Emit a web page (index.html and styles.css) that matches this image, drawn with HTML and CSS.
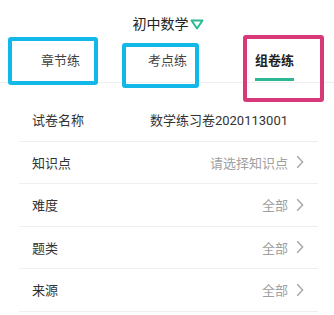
FILE: index.html
```html
<!DOCTYPE html>
<html lang="zh">
<head>
<meta charset="utf-8">
<link rel="stylesheet" href="styles.css">
</head>
<body>
<div class="page">
  <header class="header">
    <span class="title">初中数学</span>
    <svg class="caret" width="14" height="11" viewBox="0 0 14 11"><polygon points="1.5,1.5 12.5,1.5 7,9.5" fill="none" stroke="#2cb893" stroke-width="2" stroke-linejoin="round"/></svg>
  </header>
  <nav class="tabs">
    <div class="tab"><span class="tab-label">章节练</span></div>
    <div class="tab"><span class="tab-label">考点练</span></div>
    <div class="tab active"><span class="tab-label">组卷练</span></div>
  </nav>
  <ul class="form">
    <li class="row"><span class="label">试卷名称</span><span class="value strong">数学练习卷2020113001</span></li>
    <li class="row"><span class="label">知识点</span><span class="value">请选择知识点</span><span class="chev"><svg width="8" height="14" viewBox="0 0 8 14"><path d="M1.2 1.2 L6.6 7 L1.2 12.8" fill="none" stroke="#a8a8a8" stroke-width="1.5"/></svg></span></li>
    <li class="row"><span class="label">难度</span><span class="value">全部</span><span class="chev"><svg width="8" height="14" viewBox="0 0 8 14"><path d="M1.2 1.2 L6.6 7 L1.2 12.8" fill="none" stroke="#a8a8a8" stroke-width="1.5"/></svg></span></li>
    <li class="row"><span class="label">题类</span><span class="value">全部</span><span class="chev"><svg width="8" height="14" viewBox="0 0 8 14"><path d="M1.2 1.2 L6.6 7 L1.2 12.8" fill="none" stroke="#a8a8a8" stroke-width="1.5"/></svg></span></li>
    <li class="row"><span class="label">来源</span><span class="value">全部</span><span class="chev"><svg width="8" height="14" viewBox="0 0 8 14"><path d="M1.2 1.2 L6.6 7 L1.2 12.8" fill="none" stroke="#a8a8a8" stroke-width="1.5"/></svg></span></li>
  </ul>
  <div class="mark mark-blue mark-1"></div>
  <div class="mark mark-blue mark-2"></div>
  <div class="mark mark-pink mark-3"></div>
</div>
</body>
</html>
```

FILE: styles.css
```css
* { box-sizing: border-box; }
html, body { margin: 0; padding: 0; background: #fff; }
body {
  font-family: Roboto, "Noto Sans CJK SC", sans-serif;
  color: #333;
  font-size: 13px;
}
.page {
  position: relative;
  width: 334px;
  height: 315px;
  overflow: hidden;
}
.header {
  height: 47px;
  display: flex;
  align-items: center;
  justify-content: center;
}
.title {
  font-size: 14px;
  line-height: 18px;
  color: #222;
  margin-left: 2px;
}
.caret { display: block; margin-left: 1px; margin-top: 1px; }
.tabs {
  display: flex;
  padding: 0 6px 0 7px;
  border-bottom: 1px solid #efefef;
  height: 36px;
}
.tab {
  flex: 1;
  display: flex;
  justify-content: center;
  align-items: flex-start;
  padding-top: 5px;
}
.tab-label {
  font-size: 13px;
  line-height: 18px;
  color: #444;
  padding-bottom: 8px;
  border-bottom: 3px solid transparent;
}
.tab.active .tab-label {
  font-weight: bold;
  color: #222;
  border-bottom-color: #2cb893;
}
.form {
  list-style: none;
  margin: 16px 16px 0 19px;
  padding: 0;
}
.row {
  height: 42.5px;
  display: flex;
  align-items: center;
  padding: 0 13px;
  border-bottom: 1px solid #efefef;
}
.label { flex: 1; color: #333; }
.value { color: #a0a0a0; }
.value.strong { color: #333; margin-right: 17px; }
.chev { display: flex; margin-left: 8px; margin-right: 1px; }
.mark {
  position: absolute;
  border: 4px solid;
  border-radius: 3px;
}
.mark-blue { border-color: #12b9e8; }
.mark-pink { border-color: #d83a79; }
.mark-1 { left: 8px; top: 37px; width: 90px; height: 48px; }
.mark-2 { left: 122px; top: 43px; width: 77px; height: 45px; }
.mark-3 { left: 243px; top: 35px; width: 81px; height: 67px; }
```
